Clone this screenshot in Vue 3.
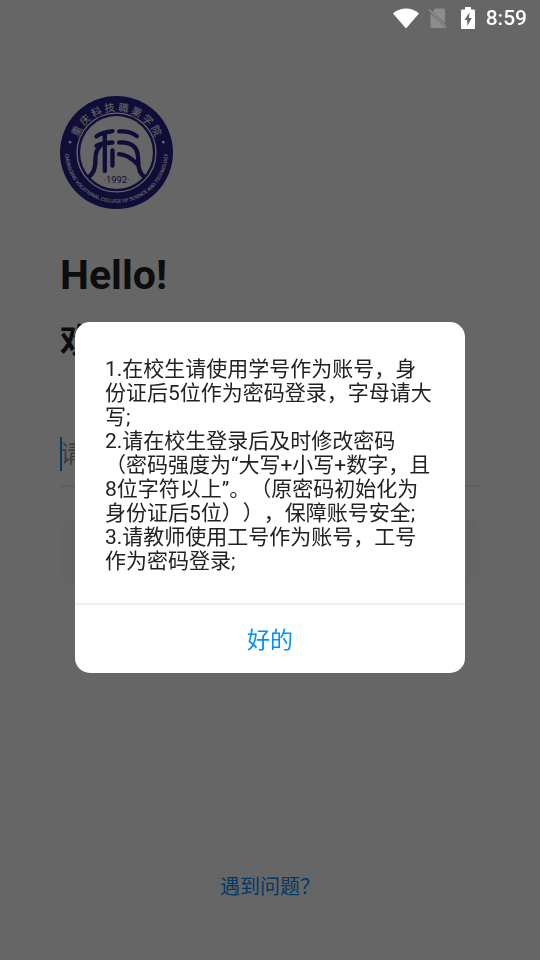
<script setup>
import { ref } from 'vue'

const account = ref('')
const showNotice = ref(true)

const notices = [
  '1.在校生请使用学号作为账号，身份证后5位作为密码登录，字母请大写;',
  '2.请在校生登录后及时修改密码（密码强度为“大写+小写+数字，且8位字符以上”。（原密码初始化为身份证后5位）），保障账号安全;',
  '3.请教师使用工号作为账号，工号作为密码登录;'
]
</script>

<template>
  <div class="page">
    <header class="status-bar">
      <svg class="wifi" viewBox="0 0 26 20" aria-label="Wi-Fi">
        <path d="M0 5.500C7.500-1.300 18.500-1.300 26 5.500L13 20.500z" fill="#fff" />
      </svg>
      <svg class="sim" viewBox="0 0 20 22" aria-label="No SIM">
        <path d="M7.500 1.500H15.500Q17 1.500 17 3V16.500L4.500 4.500zM2.500 6.500L17 20.500Q16.500 21 15.500 21H4Q2.500 21 2.500 19.500z" fill="#8c8c8c" />
        <path d="M1 2.500L18.500 20.500" stroke="#8c8c8c" stroke-width="1.500" />
      </svg>
      <svg class="battery" viewBox="0 0 14 22" aria-label="Charging">
        <path d="M4 0H10V2.500H13Q14 2.500 14 3.500V21Q14 22 13 22H1Q0 22 0 21V3.500Q0 2.500 1 2.500H4z" fill="#fff" />
        <path d="M8.500 5.500L3.500 13H6.300V19L10.800 11H8z" fill="#666" />
      </svg>
      <span class="time">8:59</span>
    </header>

    <main class="login">
      <svg class="logo" viewBox="0 0 338 338" role="img" aria-label="重庆科技职业学院">
        <defs>
          <path id="arc-top" d="M45 169A124 124 0 0 1 293 169" />
          <path id="arc-bottom" d="M16 148A154 154 0 1 0 322 148" />
        </defs>
        <circle cx="169" cy="169" r="169" fill="#28238c" />
        <circle cx="169" cy="169" r="118" fill="none" stroke="#fff" stroke-width="4" />
        <circle cx="169" cy="169" r="109" fill="#fff" />
        <text class="name-cn" text-anchor="middle">
          <textPath href="#arc-top" startOffset="50%">重 庆 科 技 職 業 学 院</textPath>
        </text>
        <text class="name-en" text-anchor="middle">
          <textPath href="#arc-bottom" startOffset="50%">CHONGQING VOCATIONAL COLLEGE OF SCIENCE AND TECHNOLOGY</textPath>
        </text>
        <circle cx="30" cy="138" r="4" fill="#fff" />
        <circle cx="309" cy="138" r="4" fill="#fff" />
        <g fill="none" stroke="#28238c" stroke-width="13" stroke-linecap="round" stroke-linejoin="round">
          <path d="M109 121Q122 110 157 105" />
          <path d="M109 149Q122 141 157 139" />
          <path d="M134 115V224" />
          <path d="M120 150Q106 162 106 190Q107 225 88 241" />
          <path d="M157 163V208" />
          <path d="M177 106Q210 104 230 120" />
          <path d="M177 139Q208 138 223 153Q234 164 234 195Q234 228 251 241" />
          <path d="M177 174Q205 176 230 203" />
        </g>
        <text class="year" x="169" y="259" text-anchor="middle">·1992·</text>
      </svg>

      <h1>Hello!</h1>
      <h2>欢迎</h2>
      <input v-model="account" class="account" type="text" placeholder="请输入账号" aria-label="账号" />
      <button class="next" type="button" aria-label="登录"></button>
      <a class="help" href="#">遇到问题？</a>
    </main>

    <div v-if="showNotice" class="overlay">
      <section class="dialog" role="dialog" aria-modal="true">
        <div class="dialog-body">
          <p v-for="text in notices" :key="text">{{ text }}</p>
        </div>
        <button class="confirm" type="button" @click="showNotice = false">好的</button>
      </section>
    </div>
  </div>
</template>

<style>
body {
  background: #fff;
}
</style>

<style scoped>
.page {
  display: flex;
  flex-direction: column;
  min-height: 100vh;
  font-family: Roboto, "Noto Sans CJK SC", sans-serif;
  text-spacing-trim: space-all;
  color: #222;
}
.status-bar {
  position: relative;
  z-index: 2;
  display: flex;
  justify-content: flex-end;
  align-items: center;
  height: 36px;
  padding-right: 13px;
  color: #fff;
}
.wifi {
  width: 26px;
  height: 20px;
  margin-right: 9px;
}
.sim {
  width: 20px;
  height: 22px;
  margin-right: 13px;
}
.battery {
  width: 14px;
  height: 22px;
  margin-right: 11px;
}
.time {
  font-size: 21px;
  font-weight: 500;
  line-height: 36px;
}
.login {
  flex: 1;
  display: flex;
  flex-direction: column;
  padding: 60px 60px 58px;
}
.logo {
  width: 113px;
  height: 113px;
}
.name-cn {
  fill: #fff;
  font-family: "Noto Sans CJK SC", sans-serif;
  font-size: 31px;
}
.name-en {
  fill: #fff;
  font-size: 15px;
  font-weight: 500;
}
.year {
  fill: #28238c;
  font-size: 28px;
}
h1 {
  margin: 42px 0 0;
  font-size: 41px;
  line-height: 48px;
}
h2 {
  margin: 18px 0 0;
  font-size: 34px;
  line-height: 48px;
}
.account {
  width: 100%;
  box-sizing: border-box;
  height: 34px;
  margin-top: 72px;
  padding: 0;
  border: none;
  box-shadow: inset 2px 0 #0091ff;
  background: none;
  font-family: inherit;
  font-size: 24px;
}
.account::placeholder {
  color: #999;
  opacity: 1;
}
.next {
  position: relative;
  height: 66px;
  margin-top: 47px;
  border: none;
  border-radius: 14px;
  background: #f9f9f9;
}
.next::before {
  content: "";
  position: absolute;
  top: -33px;
  left: 0;
  right: 0;
  height: 2px;
  background: #eee;
}
.help {
  margin-top: auto;
  align-self: center;
  color: #0091ff;
  font-size: 20px;
  line-height: 30px;
  text-decoration: none;
}
.overlay {
  position: fixed;
  inset: 0;
  display: flex;
  align-items: center;
  padding: 34px 75px 0;
  background: rgba(0, 0, 0, 0.6);
}
.dialog {
  flex: 1;
  overflow: hidden;
  border-radius: 15px;
  background: #fff;
}
.dialog-body {
  padding: 35px 30px 30px;
  font-size: 21px;
  line-height: 24px;
}
.dialog-body p {
  margin: 0;
}
.confirm {
  display: block;
  width: 100%;
  height: 70px;
  padding: 0 0 2px;
  border: none;
  border-top: 2px solid #eee;
  background: none;
  color: #0091ff;
  font-family: inherit;
  font-size: 23px;
  cursor: pointer;
}
</style>
